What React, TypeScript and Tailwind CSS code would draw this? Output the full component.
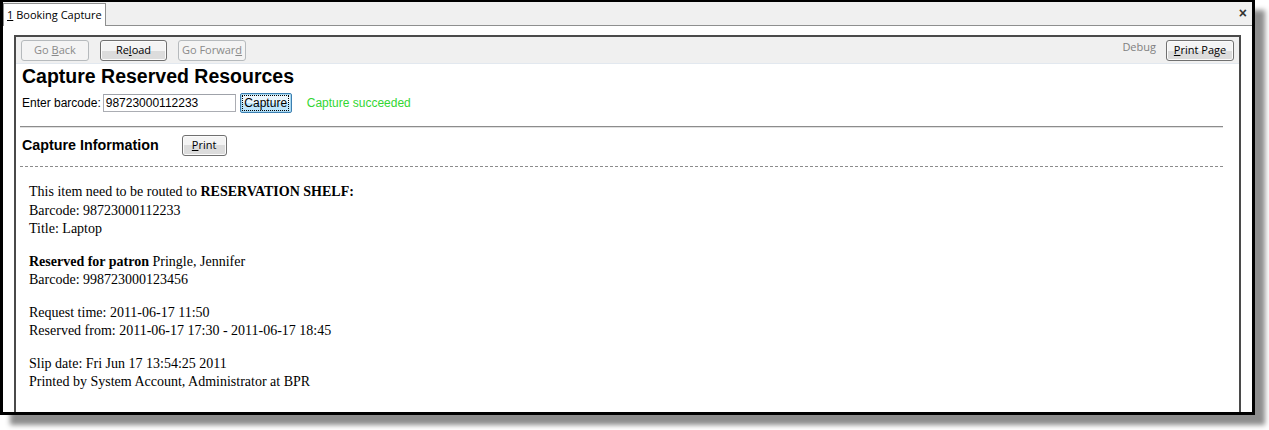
import React from 'react';

const ui = { fontFamily: '"Open Sans", "Noto Sans", sans-serif' };
const arial = { fontFamily: '"Liberation Sans", Arial, sans-serif' };
const times = { fontFamily: '"Liberation Serif", "Times New Roman", serif' };

interface BtnProps {
  children: React.ReactNode;
  disabled?: boolean;
  className?: string;
}

// Windows 7 style push button
const WinButton: React.FC<BtnProps> = ({ children, disabled, className = '' }) => {
  if (disabled) {
    return (
      <div
        className={`h-[21px] flex items-center justify-center rounded-[3px] border border-[#b6babd] bg-[#f4f4f4] text-[11px] text-[#8a8a8a] ${className}`}
        style={ui}
      >
        {children}
      </div>
    );
  }
  return (
    <div
      className={`h-[21px] flex items-center justify-center rounded-[3px] border border-[#707070] bg-linear-to-b from-[#f4f4f4] from-50% to-[#dcdcdc] to-50% text-[11px] text-black shadow-[inset_0_0_0_1px_#fbfbfb] ${className}`}
      style={ui}
    >
      {children}
    </div>
  );
};

const lines: React.ReactNode[][] = [
  [
    <>This item need to be routed to <b>RESERVATION SHELF:</b></>,
    <>Barcode: 98723000112233</>,
    <>Title: Laptop</>,
  ],
  [
    <><b>Reserved for patron</b> Pringle, Jennifer</>,
    <>Barcode: 998723000123456</>,
  ],
  [
    <>Request time: 2011-06-17 11:50</>,
    <>Reserved from: 2011-06-17 17:30 - 2011-06-17 18:45</>,
  ],
  [
    <>Slip date: Fri Jun 17 13:54:25 2011</>,
    <>Printed by System Account, Administrator at BPR</>,
  ],
];

export default function App() {
  return (
    <div className="w-[1269px] h-[430px] bg-white overflow-hidden">
      <div className="w-[1255px] h-[415px] border-[3px] border-t-[2px] border-black bg-white overflow-hidden shadow-[10px_10px_5px_rgba(0,0,0,0.45)] flex flex-col">
        {/* tab strip */}
        <div className="h-[24px] flex-shrink-0 flex items-end justify-between bg-[#f0f0f0] border-b border-[#8e8f8f] pr-[5px]">
          <div
            className="h-[23px] -mb-px px-[3px] flex items-center bg-white border border-b-0 border-[#8e8f8f] text-[11px] text-black"
            style={ui}
          >
            <span className="underline">1</span>&nbsp;Booking Capture
          </div>
          <div className="h-full flex items-center text-[14px] font-bold text-[#333] leading-none pb-[2px]" style={arial}>
            ×
          </div>
        </div>

        {/* page body */}
        <div className="flex-1 pt-[9px] pl-[11px]">
          <div className="w-[1227px] h-[400px] border-2 border-[#4a4a4a] border-b-0">
            {/* toolbar */}
            <div className="h-[27px] flex items-center justify-between px-[5px] bg-[#f0f0f0] border-b border-[#e2e8ef]">
              <div className="flex items-center gap-[11px]">
                <WinButton disabled className="w-[68px]">
                  Go&nbsp;<span className="underline">B</span>ack
                </WinButton>
                <WinButton className="w-[67px]">
                  Re<span className="underline">l</span>oad
                </WinButton>
                <WinButton disabled className="w-[68px]">
                  Go Forwar<span className="underline">d</span>
                </WinButton>
              </div>
              <div className="flex items-center gap-[10px]">
                <span className="text-[11px] text-[#808080] -mt-[6px]" style={ui}>Debug</span>
                <WinButton className="w-[68px]">
                  <span className="underline">P</span>rint Page
                </WinButton>
              </div>
            </div>

            <div className="pl-[4px] pr-[16px]">
              <h1 className="pl-[2px] text-[19.5px] font-bold text-black leading-[22px] mt-[1px]" style={arial}>
                Capture Reserved Resources
              </h1>

              <div className="pl-[2px] mt-[6px] flex items-center text-[12px] text-black" style={arial}>
                <span>Enter barcode:</span>
                <div className="ml-[2px] w-[133px] h-[18px] border border-[#abadb3] border-t-[#9fa2a9] bg-white pl-[2px] flex items-center">
                  98723000112233
                </div>
                <div className="ml-[4px] w-[52px] h-[20px] rounded-[2px] border border-[#3c7fb1] shadow-[inset_0_0_0_1px_#a8d8f0] bg-linear-to-b from-[#eaf6fd] from-50% to-[#bee6fd] to-50% flex items-center justify-center">
                  <span className="outline-1 outline-dotted outline-black px-[1px] leading-[14px]">Capture</span>
                </div>
                <span className="ml-[15px] text-[#33d633]">Capture succeeded</span>
              </div>

              <div className="mt-[13px] w-[1203px] border-t border-t-[#8c8c8c] border-b border-b-[#e0e0e0]" />

              <div className="pl-[2px] mt-[7px] flex items-center">
                <span className="text-[14.3px] font-bold text-black" style={arial}>Capture Information</span>
                <WinButton className="ml-[23px] w-[45px] h-[20px]">
                  <span className="underline">P</span>rint
                </WinButton>
              </div>

              <div className="mt-[10px] w-[1203px] border-t border-dashed border-[#8c8c8c]" />

              <div className="pl-[9px] pt-[16px] text-[14px] leading-[18.5px] text-black" style={times}>
                {lines.map((group, gi) => (
                  <div key={gi} className={gi > 0 ? 'mt-[14px]' : ''}>
                    {group.map((l, li) => (
                      <div key={li}>{l}</div>
                    ))}
                  </div>
                ))}
              </div>
            </div>
          </div>
        </div>
      </div>
    </div>
  );
}
